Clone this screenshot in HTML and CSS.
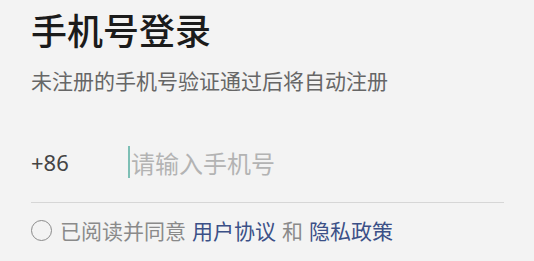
FILE: index.html
```html
<!DOCTYPE html>
<html lang="zh-CN">
<head>
<meta charset="utf-8">
<link rel="stylesheet" href="styles.css">
</head>
<body>
<div class="page">
  <h1 class="title">手机号登录</h1>
  <p class="subtitle">未注册的手机号验证通过后将自动注册</p>
  <div class="phone-row">
    <span class="code">+86</span>
    <div class="input">
      <span class="cursor"></span>
      <span class="placeholder">请输入手机号</span>
    </div>
  </div>
  <div class="agree">
    <span class="radio"></span>
    <span class="gray">已阅读并同意</span>
    <span class="link">用户协议</span>
    <span class="gray">和</span>
    <span class="link">隐私政策</span>
  </div>
</div>
</body>
</html>
```
FILE: styles.css
```css
html, body {
  margin: 0;
  padding: 0;
  background: #f3f3f3;
}
body {
  font-family: "Noto Sans CJK SC", "Noto Sans", sans-serif;
  width: 534px;
  height: 261px;
  overflow: hidden;
}
.page {
  padding: 0 30px 0 31px;
}
.title {
  margin: 0;
  padding-top: 6px;
  font-size: 36px;
  line-height: 46px;
  font-weight: 500;
  color: #1b1b1b;
}
.subtitle {
  margin: 13px 0 0;
  font-size: 21px;
  line-height: 30px;
  color: #666;
}
.phone-row {
  display: flex;
  align-items: center;
  margin-top: 44px;
  height: 64px;
  border-bottom: 1px solid #d6d6d6;
  box-sizing: border-box;
  padding-bottom: 17px;
  width: 473px;
}
.code {
  width: 97px;
  font-family: "Noto Sans", sans-serif;
  font-size: 22px;
  color: #444;
}
.input {
  display: flex;
  align-items: center;
}
.cursor {
  width: 2px;
  height: 32px;
  background: #7dbfb5;
  margin-right: 1px;
}
.placeholder {
  font-size: 24px;
  color: #b3b3b3;
}
.agree {
  display: flex;
  align-items: center;
  gap: 6px;
  margin-top: 12px;
  font-size: 21px;
  line-height: 30px;
}
.radio {
  width: 19px;
  height: 19px;
  border: 1.5px solid #8a8a8a;
  border-radius: 50%;
  margin-right: 2px;
}
.gray {
  color: #8a8a8a;
}
.link {
  color: #3b5087;
}
```
